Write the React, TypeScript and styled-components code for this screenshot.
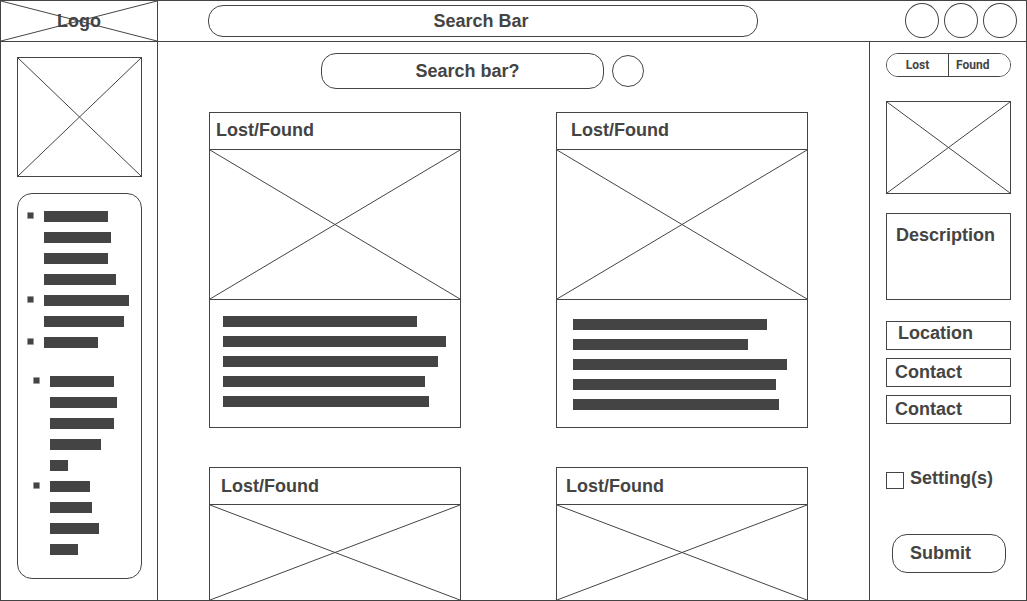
import React from "react";
import styled, { createGlobalStyle } from "styled-components";

const INK = "#444";

const GlobalStyle = createGlobalStyle`
  *, *::before, *::after { box-sizing: border-box; }
  body { margin: 0; background: #fff; }
  body, button, input, textarea {
    color: ${INK};
    font: bold 18px/20px "Liberation Sans", Arial, sans-serif;
  }
  button, input, textarea {
    margin: 0;
    padding: 0;
    border: 1px solid ${INK};
    border-radius: 0;
    background: #fff;
    outline-offset: 2px;
  }
  ::placeholder { color: ${INK}; opacity: 1; }
`;

const Frame = styled.div`
  display: flex;
  flex-direction: column;
  min-height: 100vh;
  border: 1px solid ${INK};
`;

const Header = styled.header`
  display: flex;
  height: 41px;
  border-bottom: 1px solid ${INK};
`;

const Logo = styled.a`
  position: relative;
  display: flex;
  align-items: center;
  justify-content: center;
  flex: 0 0 157px;
  border-right: 1px solid ${INK};
  color: inherit;
  text-decoration: none;
`;

const LogoText = styled.span`
  position: relative;
`;

const HeaderBar = styled.div`
  display: flex;
  flex: 1;
  align-items: center;
  padding: 0 9px 0 50px;
`;

const SearchInput = styled.input<{ $tall?: boolean }>`
  flex: 1;
  min-width: 0;
  height: ${(p) => (p.$tall ? 36 : 32)}px;
  padding: ${(p) => (p.$tall ? "0 10px 0 20px" : "0 16px 0 12px")};
  border-radius: 15px;
  text-align: center;
`;

const Actions = styled.nav`
  display: flex;
  gap: 5px;
  margin-left: 147px;
  padding-bottom: 1px;
`;

const RoundButton = styled.button<{ $small?: boolean }>`
  width: ${(p) => (p.$small ? 32 : 34)}px;
  height: ${(p) => (p.$small ? 32 : 35)}px;
  border-radius: 50%;
`;

const Body = styled.div`
  display: grid;
  flex: 1;
  grid-template-columns: 157px 1fr 157px;
`;

const LeftPanel = styled.aside`
  display: flex;
  flex-direction: column;
  gap: 16px;
  padding: 15px 15px 21px 16px;
  border-right: 1px solid ${INK};
`;

const CrossSvg = styled.svg`
  position: absolute;
  inset: 0;
  width: 100%;
  height: 100%;
  stroke: ${INK};
`;

const Picture = styled.div<{ $height: number; $framed?: boolean }>`
  position: relative;
  height: ${(p) => p.$height}px;
  border: ${(p) => (p.$framed ? `1px solid ${INK}` : "none")};
`;

const ListBox = styled.div`
  display: flex;
  flex-direction: column;
  gap: 28px;
  padding: 17px 9px 23px;
  border: 1px solid ${INK};
  border-radius: 15px;
`;

const List = styled.ul<{ $inset?: boolean }>`
  display: flex;
  flex-direction: column;
  gap: 10px;
  margin: 0;
  padding: 0 0 0 ${(p) => (p.$inset ? 6 : 0)}px;
  list-style: none;
`;

const ListItem = styled.li`
  display: flex;
  gap: 10px;
`;

const Bullet = styled.span`
  width: 7px;
  height: 7px;
  margin-top: 1px;
  border: 1px solid #999;
  border-radius: 1px;
  background: ${INK};
`;

const Lines = styled.div<{ $gap: number }>`
  display: flex;
  flex-direction: column;
  gap: ${(p) => p.$gap}px;
`;

const Line = styled.span<{ $width: number }>`
  width: ${(p) => p.$width}px;
  height: 11px;
  background: ${INK};
`;

const Main = styled.main`
  padding-top: 11px;
`;

const SearchRow = styled.div`
  display: flex;
  align-items: center;
  gap: 8px;
  padding: 0 225px 0 163px;
`;

const Cards = styled.div`
  display: grid;
  grid-template-columns: 1fr 1fr;
  gap: 39px 95px;
  padding: 23px 61px 0 51px;
`;

const Card = styled.article<{ $open?: boolean }>`
  border: 1px solid ${INK};
  border-bottom-width: ${(p) => (p.$open ? 0 : 1)}px;
`;

const CardTitle = styled.h2<{ $indent: number; $raised?: boolean }>`
  display: flex;
  align-items: center;
  height: 37px;
  margin: 0;
  padding: 0 0 ${(p) => (p.$raised ? 3 : 0)}px ${(p) => p.$indent}px;
  border-bottom: 1px solid ${INK};
  font: inherit;
`;

const CardText = styled.div<{ $pad: number }>`
  padding: ${(p) => p.$pad + 3}px 0 17px ${(p) => p.$pad}px;
  border-top: 1px solid ${INK};
`;

const RightPanel = styled.form`
  display: flex;
  flex-direction: column;
  padding: 11px 15px 27px 16px;
  border-left: 1px solid ${INK};
`;

const Toggle = styled.div`
  display: grid;
  grid-template-columns: 61px 1fr;
  height: 24px;
  margin-bottom: 24px;
  border: 1px solid ${INK};
  border-radius: 12px;
  overflow: hidden;
`;

const ToggleButton = styled.button<{ $second?: boolean }>`
  padding-left: ${(p) => (p.$second ? 7 : 0)}px;
  border: 0;
  border-left: ${(p) => (p.$second ? `1px solid ${INK}` : "0")};
  font: bold 12px/20px Roboto, sans-serif;
  text-align: ${(p) => (p.$second ? "left" : "center")};
`;

const Description = styled.textarea`
  display: block;
  height: 87px;
  margin: 19px 0 21px;
  padding: 11px 9px;
  resize: none;
`;

const Fields = styled.div`
  display: flex;
  flex-direction: column;
  gap: 8px;
`;

const Field = styled.input<{ $indent: number; $raised?: boolean }>`
  width: 100%;
  height: 29px;
  padding: 0 0 ${(p) => (p.$raised ? 4 : 0)}px ${(p) => p.$indent}px;
`;

const Setting = styled.label`
  display: flex;
  gap: 6px;
  margin: 44px 0 41px;
  padding-bottom: 4px;
`;

const Checkbox = styled.input`
  appearance: none;
  width: 18px;
  height: 17px;
  margin-top: 4px;
  &:checked { background: ${INK}; }
`;

const Submit = styled.button`
  height: 39px;
  margin: 0 5px 0 6px;
  padding: 0 0 2px 17px;
  border-radius: 15px;
  text-align: left;
`;

const Cross = () => (
  <CrossSvg aria-hidden="true">
    <line x1="0" y1="0" x2="100%" y2="100%" />
    <line x1="0" y1="100%" x2="100%" y2="0" />
  </CrossSvg>
);

const lists = [
  [[64, 67, 64, 72], [85, 80], [54]],
  [[64, 67, 64, 51, 18], [40, 42, 49, 28]],
];

const cards = [
  { indent: 6, image: 149, pad: 13, lines: [194, 223, 215, 202, 206] },
  { indent: 14, image: 149, pad: 16, lines: [194, 175, 214, 203, 206] },
  { indent: 11, image: 95, pad: 0, lines: [] },
  { indent: 9, image: 95, pad: 0, lines: [] },
];

export default function App() {
  return (
    <>
      <GlobalStyle />
      <Frame>
        <Header>
          <Logo href="#">
            <Cross />
            <LogoText>Logo</LogoText>
          </Logo>
          <HeaderBar>
            <SearchInput type="text" placeholder="Search Bar" aria-label="Search Bar" />
            <Actions>
              <RoundButton aria-label="Messages" />
              <RoundButton aria-label="Notifications" />
              <RoundButton aria-label="Profile" />
            </Actions>
          </HeaderBar>
        </Header>
        <Body>
          <LeftPanel>
            <Picture $height={120} $framed><Cross /></Picture>
            <ListBox>
              {lists.map((items, i) => (
                <List key={i} $inset={i > 0}>
                  {items.map((lines, j) => (
                    <ListItem key={j}>
                      <Bullet />
                      <Lines $gap={10}>
                        {lines.map((w, k) => <Line key={k} $width={w} />)}
                      </Lines>
                    </ListItem>
                  ))}
                </List>
              ))}
            </ListBox>
          </LeftPanel>
          <Main>
            <SearchRow>
              <SearchInput $tall type="text" placeholder="Search bar?" aria-label="Search items" />
              <RoundButton $small aria-label="Search" />
            </SearchRow>
            <Cards>
              {cards.map((card, i) => (
                <Card key={i} $open={card.lines.length === 0}>
                  <CardTitle $indent={card.indent} $raised={card.lines.length > 0}>
                    Lost/Found
                  </CardTitle>
                  <Picture $height={card.image}><Cross /></Picture>
                  {card.lines.length > 0 && (
                    <CardText $pad={card.pad}>
                      <Lines $gap={9}>
                        {card.lines.map((w, k) => <Line key={k} $width={w} />)}
                      </Lines>
                    </CardText>
                  )}
                </Card>
              ))}
            </Cards>
          </Main>
          <RightPanel onSubmit={(e) => e.preventDefault()}>
            <Toggle>
              <ToggleButton type="button">Lost</ToggleButton>
              <ToggleButton type="button" $second>Found</ToggleButton>
            </Toggle>
            <Picture $height={93} $framed><Cross /></Picture>
            <Description placeholder="Description" aria-label="Description" />
            <Fields>
              <Field $indent={11} $raised placeholder="Location" aria-label="Location" />
              <Field $indent={8} placeholder="Contact" aria-label="Contact" />
              <Field $indent={8} placeholder="Contact" aria-label="Second contact" />
            </Fields>
            <Setting>
              <Checkbox type="checkbox" />
              Setting(s)
            </Setting>
            <Submit type="submit">Submit</Submit>
          </RightPanel>
        </Body>
      </Frame>
    </>
  );
}
